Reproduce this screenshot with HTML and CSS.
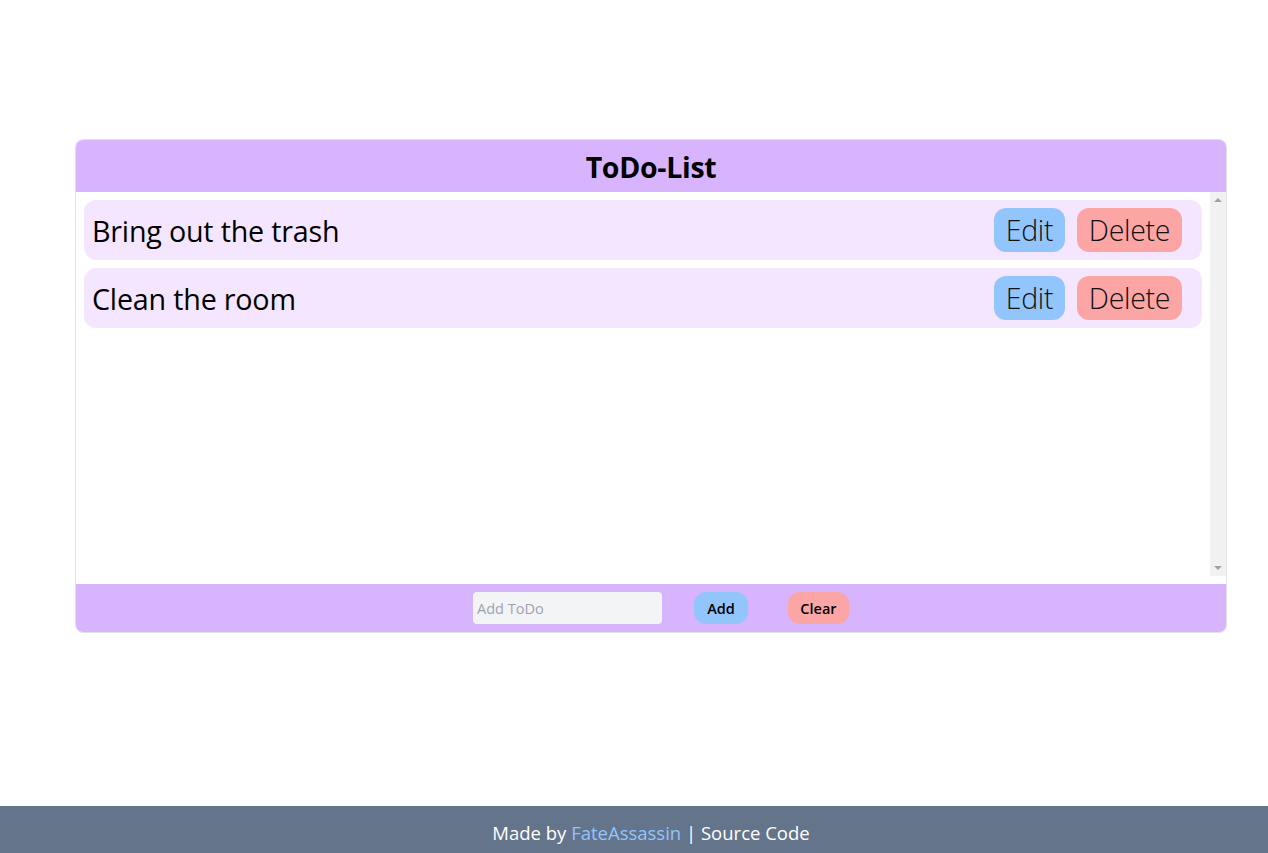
FILE: index.html
```html
<!DOCTYPE html>
<html>
<head>
<meta charset="utf-8">
<title>ToDo-List</title>
<link rel="stylesheet" href="styles.css">
</head>
<body>
<div class="page">
  <main class="main">
    <section class="card">
      <header class="card-head">ToDo-List</header>
      <div class="list-wrap">
        <div class="list">
          <div class="item">
            <span class="item-text">Bring out the trash</span>
            <div class="item-actions">
              <button class="btn btn-edit">Edit</button>
              <button class="btn btn-delete">Delete</button>
            </div>
          </div>
          <div class="item">
            <span class="item-text">Clean the room</span>
            <div class="item-actions">
              <button class="btn btn-edit">Edit</button>
              <button class="btn btn-delete">Delete</button>
            </div>
          </div>
        </div>
        <div class="scrollbar" aria-hidden="true">
          <span class="sb-btn"><span class="arrow-up"></span></span>
          <span class="sb-btn"><span class="arrow-down"></span></span>
        </div>
      </div>
      <div class="card-foot">
        <input class="todo-input" type="text" placeholder="Add ToDo">
        <button class="small-btn add-btn">Add</button>
        <button class="small-btn clear-btn">Clear</button>
      </div>
    </section>
  </main>
  <footer class="footer">
    <span>Made by <a class="footer-link" href="#">FateAssassin</a> | Source Code</span>
  </footer>
</div>
</body>
</html>
```
FILE: styles.css
```css
* { box-sizing: border-box; }
html, body { margin: 0; padding: 0; }
body {
  font-family: "Open Sans", "Noto Sans", sans-serif;
  color: #000;
  background: #fff;
}
.page {
  min-height: 100vh;
  display: flex;
  flex-direction: column;
}
.main {
  flex: 1;
  padding: 139px 0 0 75px;
}
.card {
  width: 1152px;
  border: 1px solid #e2e2e2;
  border-radius: 8px;
  overflow: hidden;
  display: flex;
  flex-direction: column;
}
.card-head {
  background: #d8b4fe;
  height: 52px;
  display: flex;
  align-items: center;
  justify-content: center;
  font-size: 28.5px;
  font-weight: 700;
  letter-spacing: -0.3px;
  padding-top: 2px;
}
.list-wrap {
  height: 392px;
  padding-bottom: 8px;
  display: flex;
}
.list {
  flex: 1;
  overflow: hidden;
  padding: 8px;
  display: flex;
  flex-direction: column;
  gap: 8px;
}
.scrollbar {
  width: 16px;
  flex-shrink: 0;
  background: #f1f1f1;
  display: flex;
  flex-direction: column;
  justify-content: space-between;
}
.sb-btn {
  height: 16px;
  display: flex;
  align-items: center;
  justify-content: center;
}
.arrow-up {
  width: 0;
  height: 0;
  border-left: 4px solid transparent;
  border-right: 4px solid transparent;
  border-bottom: 4px solid #a3a3a3;
}
.arrow-down {
  width: 0;
  height: 0;
  border-left: 4px solid transparent;
  border-right: 4px solid transparent;
  border-top: 4px solid #a3a3a3;
}
.item {
  background: #f5e6ff;
  border-radius: 12px;
  height: 60px;
  padding: 8px 20px 8px 8px;
  display: flex;
  align-items: center;
  justify-content: space-between;
  flex-shrink: 0;
}
.item-text {
  font-size: 28.7px;
  letter-spacing: -0.2px;
}
.item-actions {
  display: flex;
  gap: 12px;
}
.btn {
  font-family: inherit;
  font-weight: 300;
  font-size: 28.5px;
  height: 44px;
  padding: 0;
  border: none;
  border-radius: 12px;
  color: #111;
  display: flex;
  align-items: center;
  justify-content: center;
  letter-spacing: -0.3px;
}
.btn-edit { background: #93c5fd; width: 71px; }
.btn-delete { background: #fca5a5; width: 105px; }
.card-foot {
  background: #d8b4fe;
  height: 48px;
  display: flex;
  align-items: center;
  justify-content: center;
  padding-left: 20px;
}
.todo-input {
  width: 189px;
  height: 32px;
  border: none;
  border-radius: 4px;
  background: #f3f4f6;
  font-family: inherit;
  font-size: 14.5px;
  padding: 0 4px;
  margin-right: 32px;
  outline: none;
}
.todo-input::placeholder { color: #9ca3af; }
.small-btn {
  font-family: inherit;
  font-size: 14.5px;
  font-weight: 600;
  height: 32px;
  border: none;
  border-radius: 12px;
  color: #000;
  padding: 0;
}
.add-btn { background: #93c5fd; width: 54px; margin-right: 40px; }
.clear-btn { background: #fca5a5; width: 61px; }
.footer {
  background: #64748b;
  height: 47px;
  display: flex;
  align-items: center;
  justify-content: center;
  padding-left: 34px;
  padding-top: 5px;
  color: #fff;
  font-size: 18.5px;
}
.footer-link {
  color: #93c5fd;
  text-decoration: none;
}
```
